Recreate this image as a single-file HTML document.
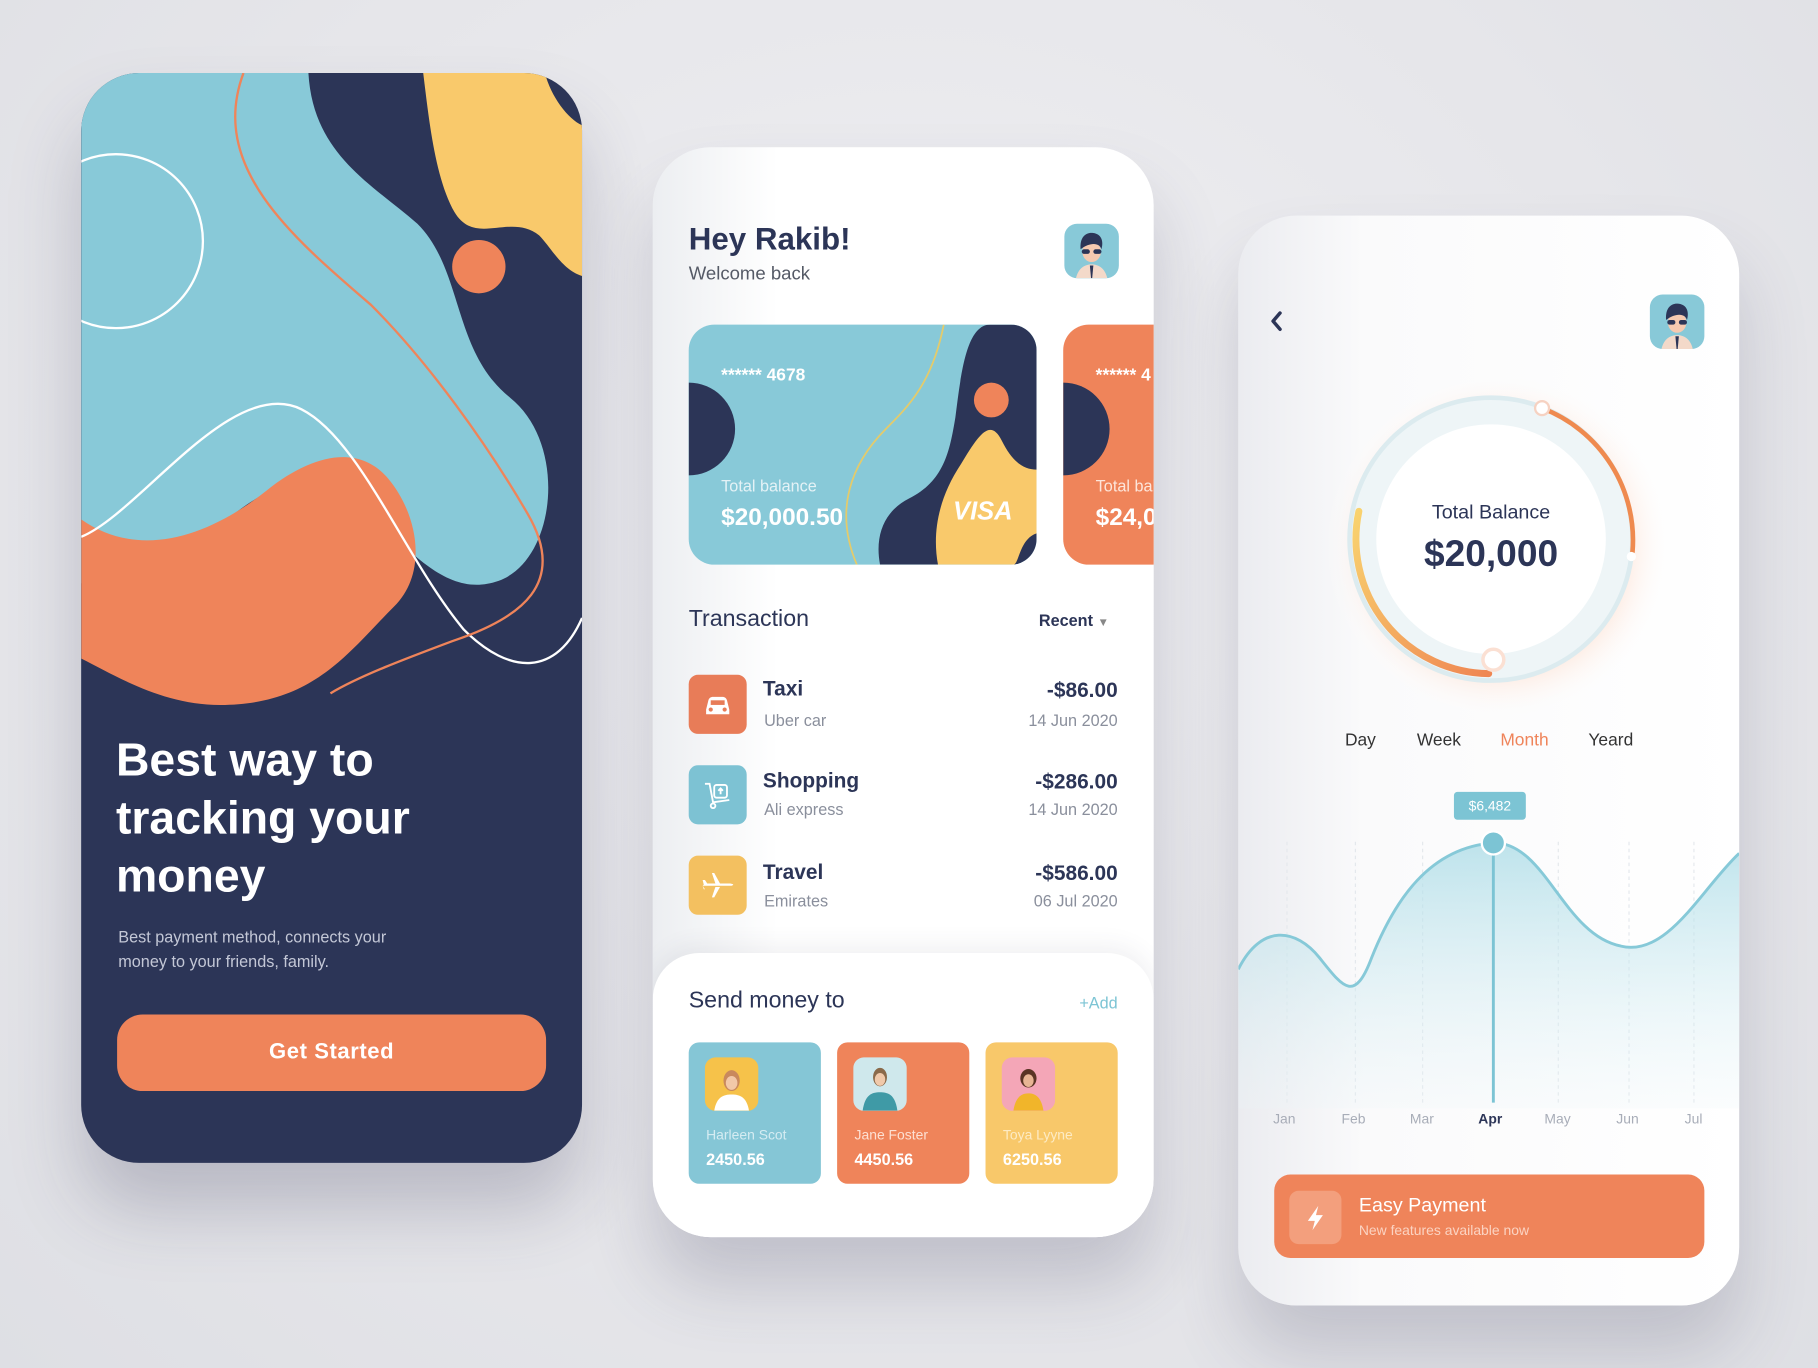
<!DOCTYPE html>
<html><head><meta charset="utf-8"><style>
*{margin:0;padding:0;box-sizing:border-box}
html,body{width:1818px;height:1368px;overflow:hidden}
body{background:radial-gradient(ellipse at 50% 40%,#f0f0f3 0%,#e6e6ea 60%,#dedfe4 100%);font-family:"Liberation Sans",sans-serif}
#w{position:absolute;left:0;top:0;width:1568px;height:1180px;transform:scale(1.15944);transform-origin:0 0}
.abs{position:absolute}
.ph{position:absolute;width:432px;height:940px;border-radius:50px;overflow:hidden}
.t{position:absolute;white-space:nowrap}
.navy{color:#2c3557}
</style></head><body><div id="w">

<!-- LEFT PHONE -->
<div class="ph" style="left:70px;top:63px;background:#2c3557;box-shadow:0 40px 60px rgba(60,60,90,.25)">
<svg width="432" height="940" class="abs" style="left:0;top:0">
 <path d="M0,0 L196,0 C200,70 250,95 290,130 C330,170 320,240 370,280 C420,320 410,420 360,438 C320,452 290,420 250,380 C200,330 150,360 110,400 C70,440 30,450 0,440 Z" fill="#88c9d8"/>
 <path d="M0,385 C50,420 110,400 160,360 C200,328 240,320 265,350 C290,380 300,430 270,460 C230,500 200,545 120,545 C70,545 30,520 0,505 Z" fill="#ef845a"/>
 <path d="M295,0 L400,0 C405,20 420,40 432,45 L432,175 C415,170 405,150 395,140 C370,120 340,150 322,120 C305,90 300,40 295,0 Z" fill="#f9c96b"/>
 <circle cx="343" cy="167" r="23" fill="#ef845a"/>
 <circle cx="30" cy="145" r="75" fill="none" stroke="#fff" stroke-width="2"/>
 <path d="M0,400 C50,380 130,260 190,290 C240,315 280,420 330,480 C370,520 410,520 432,470" fill="none" stroke="#fff" stroke-width="2"/>
 <path d="M140,0 C110,80 180,140 250,200 C300,250 350,320 385,380 C420,440 380,470 320,490 C280,505 240,520 215,535" fill="none" stroke="#ef845a" stroke-width="2"/>
</svg>
<div class="t" style="left:30px;top:568px;font-size:40px;font-weight:bold;color:#fff;line-height:50px">Best way to<br>tracking your<br>money</div>
<div class="t" style="left:32px;top:735px;font-size:14px;color:#c3c7d6;line-height:21px">Best payment method, connects your<br>money to your friends, family.</div>
<div class="abs" style="left:31px;top:812px;width:370px;height:66px;border-radius:22px;background:#ef845a;color:#fff;font-size:19px;font-weight:bold;text-align:center;line-height:66px;letter-spacing:.5px">Get Started</div>
</div>

<!-- MIDDLE PHONE -->
<div class="ph" style="left:563px;top:127px;background:linear-gradient(90deg,#eceef1 0%,#fff 25%,#fff 100%);box-shadow:0 40px 60px rgba(60,60,90,.22)">
<div class="t navy" style="left:31px;top:64px;font-size:27px;font-weight:bold">Hey Rakib!</div>
<div class="t" style="left:31px;top:101px;font-size:16px;color:#555a66">Welcome back</div>
<div class="abs" style="left:355px;top:66px;width:47px;height:47px;border-radius:11px;background:#88c9d8;overflow:hidden">
 <svg width="47" height="47"><path d="M10,47 C12,38 18,35 23.5,35 C29,35 35,38 37,47Z" fill="#f3d9c9"/><path d="M22,36 L25,36 L24,47 L23,47Z" fill="#2c3557"/><ellipse cx="23.5" cy="24" rx="8" ry="9" fill="#f6c9b0"/><path d="M14,22 C13,10 20,7 25,8 C32,9 34,15 32,22 C30,16 22,16 14,22Z" fill="#2c3557"/><rect x="15" y="22" width="7" height="4" rx="2" fill="#2c3557"/><rect x="25" y="22" width="7" height="4" rx="2" fill="#2c3557"/></svg>
</div>
<!-- card1 -->
<div class="abs" style="left:31px;top:153px;width:300px;height:207px;border-radius:22px;overflow:hidden;background:#88c9d8">
<svg width="300" height="207" class="abs">
 <circle cx="0" cy="90" r="40" fill="#2c3557"/>
 <path d="M300,0 L300,207 L165,207 C160,180 170,160 190,150 C220,135 225,110 230,80 C235,40 240,0 260,0 Z" fill="#2c3557"/>
 <path d="M300,125 L300,180 C285,185 285,207 280,207 L215,207 C210,180 215,150 235,120 C250,95 260,80 270,100 C280,120 290,125 300,125Z" fill="#f9c96b"/>
 <circle cx="261" cy="65" r="15" fill="#ef845a"/>
 <path d="M220,0 C210,50 190,70 170,90 C140,120 125,160 145,207" fill="none" stroke="#e5cb6a" stroke-width="1.5"/>
</svg>
<div class="t" style="left:28px;top:35px;font-size:15px;font-weight:bold;color:#fff">****** 4678</div>
<div class="t" style="left:28px;top:131px;font-size:14px;color:#e4f2f6">Total balance</div>
<div class="t" style="left:28px;top:155px;font-size:21px;font-weight:bold;color:#fff">$20,000.50</div>
<div class="t" style="left:228px;top:148px;font-size:22px;font-weight:bold;font-style:italic;color:#fff">VISA</div>
</div>
<div class="abs" style="left:354px;top:153px;width:100px;height:207px;border-radius:22px;overflow:hidden;background:#ef845a">
<svg width="100" height="207" class="abs"><circle cx="0" cy="90" r="40" fill="#2c3557"/></svg>
<div class="t" style="left:28px;top:35px;font-size:15px;font-weight:bold;color:#fff">****** 4</div>
<div class="t" style="left:28px;top:131px;font-size:14px;color:#fde5da">Total balance</div>
<div class="t" style="left:28px;top:155px;font-size:21px;font-weight:bold;color:#fff">$24,000</div>
</div>
<div class="t navy" style="left:31px;top:396px;font-size:20px">Transaction</div>
<div class="t navy" style="left:333px;top:400px;font-size:14px;font-weight:bold">Recent <span style="font-size:10px;color:#888">▼</span></div>
<!-- rows -->
<div class="abs" style="left:31px;top:455px;width:50px;height:51px;border-radius:8px;background:#e87c58"><svg width="50" height="51"><path d="M15,30 L17,22 C17.5,20 19,19 21,19 L29,19 C31,19 32.5,20 33,22 L35,30 L35,34 L15,34Z" fill="#fff"/><circle cx="19" cy="30" r="1.8" fill="#e87c58"/><circle cx="31" cy="30" r="1.8" fill="#e87c58"/><rect x="19" y="22" width="12" height="4" fill="#e87c58"/></svg></div>
<div class="t navy" style="left:95px;top:457px;font-size:18px;font-weight:bold">Taxi</div>
<div class="t" style="left:96px;top:486px;font-size:14px;color:#8a8f9c">Uber car</div>
<div class="t navy" style="right:31px;top:458px;font-size:18px;font-weight:bold">-$86.00</div>
<div class="t" style="right:31px;top:486px;font-size:14px;color:#8a8f9c">14 Jun 2020</div>

<div class="abs" style="left:31px;top:533px;width:50px;height:51px;border-radius:8px;background:#7dc2d3"><svg width="50" height="51" fill="none" stroke="#fff" stroke-width="1.6"><path d="M14,16 L18,16 L21,32 L35,30"/><rect x="22" y="17" width="11" height="11" rx="2"/><circle cx="21" cy="35" r="2"/><path d="M27.5,20 L27.5,25 M25.5,22 L27.5,20 L29.5,22"/></svg></div>
<div class="t navy" style="left:95px;top:536px;font-size:18px;font-weight:bold">Shopping</div>
<div class="t" style="left:96px;top:563px;font-size:14px;color:#8a8f9c">Ali express</div>
<div class="t navy" style="right:31px;top:537px;font-size:18px;font-weight:bold">-$286.00</div>
<div class="t" style="right:31px;top:563px;font-size:14px;color:#8a8f9c">14 Jun 2020</div>

<div class="abs" style="left:31px;top:611px;width:50px;height:51px;border-radius:8px;background:#f3c060"><svg width="50" height="51"><path d="M12,26 L36,26 C38,26 39,25 38,24.5 L36,24 L27,24 L22,15 L20,15 L23,24 L16,24 L14,21 L12,21 L13,25Z M27,27 L22,36 L20,36 L23,27Z M12,26 L13,29 L14,29" fill="#fff"/></svg></div>
<div class="t navy" style="left:95px;top:615px;font-size:18px;font-weight:bold">Travel</div>
<div class="t" style="left:96px;top:642px;font-size:14px;color:#8a8f9c">Emirates</div>
<div class="t navy" style="right:31px;top:616px;font-size:18px;font-weight:bold">-$586.00</div>
<div class="t" style="right:31px;top:642px;font-size:14px;color:#8a8f9c">06 Jul 2020</div>

<!-- send panel -->
<div class="abs" style="left:0;top:695px;width:432px;height:260px;border-radius:40px 40px 0 0;background:#fff;box-shadow:0 -6px 20px rgba(60,60,90,.08)">
<div class="t navy" style="left:31px;top:30px;font-size:20px">Send money to</div>
<div class="t" style="right:31px;top:35px;font-size:14px;color:#7cc4d4">+Add</div>
<div class="abs" style="left:31px;top:77px;width:114px;height:122px;border-radius:9px;background:#85c6d6">
 <div class="abs" style="left:14px;top:13px;width:46px;height:46px;border-radius:9px;background:#f6c24a;overflow:hidden"><svg width="46" height="46"><path d="M8,46 C10,34 16,32 23,32 C30,32 36,34 38,46Z" fill="#fff"/><ellipse cx="23" cy="20" rx="7" ry="9" fill="#c9895d"/><ellipse cx="23" cy="22" rx="5" ry="6" fill="#f2c8a8"/></svg></div>
 <div class="t" style="left:15px;top:73px;font-size:12px;color:#d5ecf2">Harleen Scot</div>
 <div class="t" style="left:15px;top:93px;font-size:14px;font-weight:bold;color:#fff">2450.56</div>
</div>
<div class="abs" style="left:159px;top:77px;width:114px;height:122px;border-radius:9px;background:#ef845a">
 <div class="abs" style="left:14px;top:13px;width:46px;height:46px;border-radius:9px;background:#cfe8ec;overflow:hidden"><svg width="46" height="46"><path d="M8,46 C10,32 16,30 23,30 C30,30 36,32 38,46Z" fill="#3f9aa6"/><ellipse cx="23" cy="17" rx="6" ry="8" fill="#8a6a4a"/><ellipse cx="23" cy="19" rx="4.5" ry="5.5" fill="#f0c9aa"/></svg></div>
 <div class="t" style="left:15px;top:73px;font-size:12px;color:#fde0d3">Jane Foster</div>
 <div class="t" style="left:15px;top:93px;font-size:14px;font-weight:bold;color:#fff">4450.56</div>
</div>
<div class="abs" style="left:287px;top:77px;width:114px;height:122px;border-radius:9px;background:#f8c86a">
 <div class="abs" style="left:14px;top:13px;width:46px;height:46px;border-radius:9px;background:#f4a6b7;overflow:hidden"><svg width="46" height="46"><path d="M10,46 C12,34 17,31 23,31 C29,31 34,34 36,46Z" fill="#f1b52a"/><ellipse cx="23" cy="18" rx="7" ry="8" fill="#5a3424"/><ellipse cx="23" cy="20" rx="4.5" ry="5.5" fill="#e8b594"/></svg></div>
 <div class="t" style="left:15px;top:73px;font-size:12px;color:#fdebc4">Toya Lyyne</div>
 <div class="t" style="left:15px;top:93px;font-size:14px;font-weight:bold;color:#fff">6250.56</div>
</div>
</div>
</div>

<!-- RIGHT PHONE -->
<div class="ph" style="left:1068px;top:186px;background:linear-gradient(90deg,#ebecf0 0%,#fafafb 25%,#fff 100%);box-shadow:0 40px 60px rgba(60,60,90,.2)">
<svg width="432" height="940" class="abs" style="left:0;top:0">
 <defs>
  <linearGradient id="fg" x1="0" y1="0" x2="0" y2="1"><stop offset="0" stop-color="#a9dbe6" stop-opacity=".75"/><stop offset="1" stop-color="#eaf5f8" stop-opacity=".2"/></linearGradient>
  <radialGradient id="gl" cx=".5" cy=".5" r=".5"><stop offset=".75" stop-color="#fde6da" stop-opacity=".7"/><stop offset="1" stop-color="#fff" stop-opacity="0"/></radialGradient>
  <linearGradient id="ar" x1="0" y1="0" x2="1" y2="1"><stop offset="0" stop-color="#f9d36f"/><stop offset="1" stop-color="#ef8652"/></linearGradient>
 </defs>
 <path d="M36,84 L30,91 L36,98" fill="none" stroke="#2c3557" stroke-width="3" stroke-linecap="round" stroke-linejoin="round"/>
 <circle cx="224" cy="285" r="150" fill="url(#gl)"/>
 <circle cx="218" cy="279" r="122" fill="#eef5f7" stroke="#dcebef" stroke-width="4"/>
 <circle cx="218" cy="279" r="99" fill="#fff"/>
 <path d="M262,166 A122,122 0 0 1 340,290" fill="none" stroke="#ef8a4f" stroke-width="4" stroke-linecap="round"/>
 <path d="M104,255 A116,116 0 0 0 216,395" fill="none" stroke="url(#ar)" stroke-width="6" stroke-linecap="round"/>
 <circle cx="262" cy="166" r="6" fill="#fff" stroke="#f6d2c2" stroke-width="2"/>
 <circle cx="339" cy="294" r="4" fill="#fff"/>
 <circle cx="220" cy="383" r="9" fill="#fff" stroke="#fbe0d3" stroke-width="3"/>
 <g stroke="#e4e8ec" stroke-width="1" stroke-dasharray="3 3"><line x1="42" y1="540" x2="42" y2="765"/><line x1="101" y1="540" x2="101" y2="765"/><line x1="159" y1="540" x2="159" y2="765"/><line x1="276" y1="540" x2="276" y2="765"/><line x1="337" y1="540" x2="337" y2="765"/><line x1="393" y1="540" x2="393" y2="765"/></g>
 <path d="M0,650 C20,610 50,615 70,640 C90,665 100,680 115,640 C135,590 165,545 220,541 C265,540 280,620 330,630 C370,640 400,580 432,550 L432,770 L0,770 Z" fill="url(#fg)"/>
 <path d="M0,650 C20,610 50,615 70,640 C90,665 100,680 115,640 C135,590 165,545 220,541 C265,540 280,620 330,630 C370,640 400,580 432,550" fill="none" stroke="#86c9d8" stroke-width="2.5"/>
 <line x1="220" y1="541" x2="220" y2="765" stroke="#7cc4d4" stroke-width="2.5"/>
 <circle cx="220" cy="541" r="10" fill="#7cc4d4" stroke="#fff" stroke-width="2"/>
 <rect x="186" y="497" width="62" height="24" rx="3" fill="#7cc4d4"/>
</svg>
<div class="abs" style="left:355px;top:68px;width:47px;height:47px;border-radius:11px;background:#88c9d8;overflow:hidden">
 <svg width="47" height="47"><path d="M10,47 C12,38 18,35 23.5,35 C29,35 35,38 37,47Z" fill="#f3d9c9"/><path d="M22,36 L25,36 L24,47 L23,47Z" fill="#2c3557"/><ellipse cx="23.5" cy="24" rx="8" ry="9" fill="#f6c9b0"/><path d="M14,22 C13,10 20,7 25,8 C32,9 34,15 32,22 C30,16 22,16 14,22Z" fill="#2c3557"/><rect x="15" y="22" width="7" height="4" rx="2" fill="#2c3557"/><rect x="25" y="22" width="7" height="4" rx="2" fill="#2c3557"/></svg>
</div>
<div class="t navy" style="left:118px;top:246px;width:200px;text-align:center;font-size:17px">Total Balance</div>
<div class="t navy" style="left:118px;top:273px;width:200px;text-align:center;font-size:32px;font-weight:bold">$20,000</div>
<div class="t" style="left:92px;top:444px;font-size:15px;color:#333">Day</div>
<div class="t" style="left:154px;top:444px;font-size:15px;color:#333">Week</div>
<div class="t" style="left:226px;top:444px;font-size:15px;color:#ef845a">Month</div>
<div class="t" style="left:302px;top:444px;font-size:15px;color:#333">Yeard</div>
<div class="t" style="left:186px;top:502px;width:62px;text-align:center;font-size:12px;color:#fff">$6,482</div>
<div class="t" style="left:30px;top:772px;font-size:12px;color:#a8adb8">Jan</div>
<div class="t" style="left:89px;top:772px;font-size:12px;color:#a8adb8">Feb</div>
<div class="t" style="left:148px;top:772px;font-size:12px;color:#a8adb8">Mar</div>
<div class="t navy" style="left:207px;top:772px;font-size:12px;font-weight:bold">Apr</div>
<div class="t" style="left:264px;top:772px;font-size:12px;color:#a8adb8">May</div>
<div class="t" style="left:326px;top:772px;font-size:12px;color:#a8adb8">Jun</div>
<div class="t" style="left:385px;top:772px;font-size:12px;color:#a8adb8">Jul</div>
<div class="abs" style="left:31px;top:827px;width:371px;height:72px;border-radius:14px;background:#ef845a">
 <div class="abs" style="left:13px;top:14px;width:45px;height:46px;border-radius:8px;background:#f39f7d"><svg width="45" height="46"><path d="M25,13 L16,26 L22,26 L20,34 L29,21 L23,21Z" fill="#fff"/></svg></div>
 <div class="t" style="left:73px;top:17px;font-size:17px;color:#fff">Easy Payment</div>
 <div class="t" style="left:73px;top:41px;font-size:12px;color:#fbd3c2">New features available now</div>
</div>
</div>

</div></body></html>
